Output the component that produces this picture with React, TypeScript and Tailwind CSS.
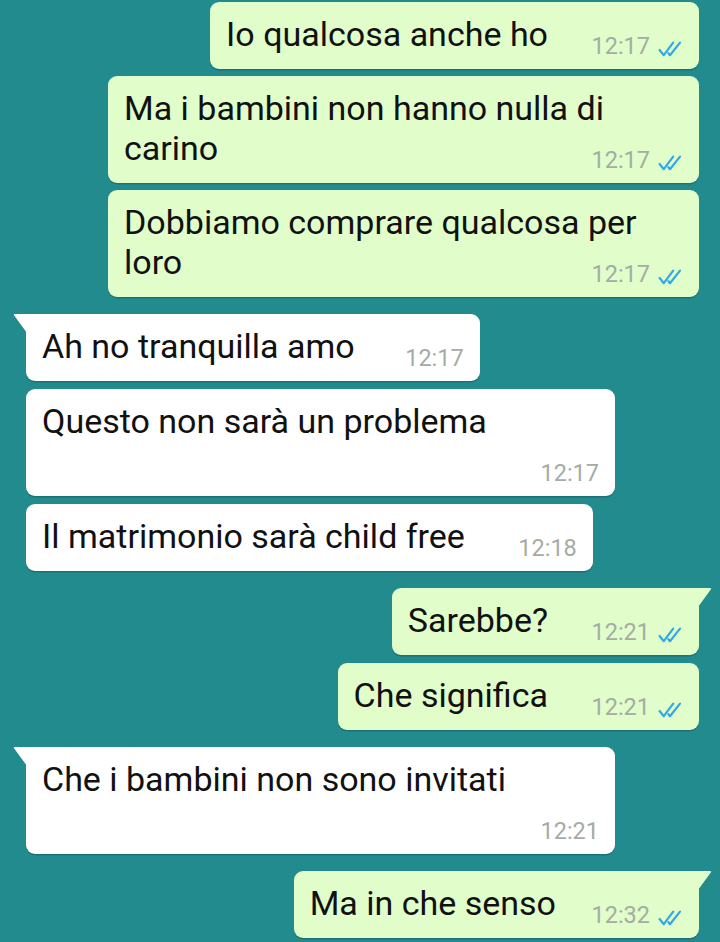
import React from 'react';

type Msg = {
  id: number;
  text: string;
  time: string;
  out: boolean;
  tail?: boolean;
  timeOwnLine?: boolean;
  spacer?: string;
  gap: string;
};

const messages: Msg[] = [
  { id: 1, text: 'Io qualcosa anche ho', time: '12:17', out: true, gap: 'mt-[2px]' },
  { id: 2, text: 'Ma i bambini non hanno nulla di carino', time: '12:17', out: true, gap: 'mt-[7px]' },
  { id: 3, text: 'Dobbiamo comprare qualcosa per loro', time: '12:17', out: true, gap: 'mt-[7px]' },
  { id: 4, text: 'Ah no tranquilla amo', time: '12:17', out: false, tail: true, spacer: 'w-[109px]', gap: 'mt-[17px]' },
  { id: 5, text: 'Questo non sarà un problema', time: '12:17', out: false, timeOwnLine: true, gap: 'mt-[8px]' },
  { id: 6, text: 'Il matrimonio sarà child free', time: '12:18', out: false, gap: 'mt-[8px]' },
  { id: 7, text: 'Sarebbe?', time: '12:21', out: true, tail: true, gap: 'mt-[17px]' },
  { id: 8, text: 'Che significa', time: '12:21', out: true, gap: 'mt-[8px]' },
  { id: 9, text: 'Che i bambini non sono invitati', time: '12:21', out: false, tail: true, timeOwnLine: true, gap: 'mt-[17px]' },
  { id: 10, text: 'Ma in che senso', time: '12:32', out: true, tail: true, spacer: 'w-[127px]', gap: 'mt-[17px]' },
];

// double blue ticks
function ReadTicks() {
  return (
    <svg width="25" height="16" viewBox="0 0 25 16" fill="none" className="mb-[1px]">
      <path d="M1.6 9 L5.8 14.2 L15.2 1.6" stroke="#33a9e3" strokeWidth="2.2" strokeLinecap="round" strokeLinejoin="round" />
      <path d="M10.4 12.2 L12 14.2 L22 1.6" stroke="#33a9e3" strokeWidth="2.2" strokeLinecap="round" strokeLinejoin="round" />
    </svg>
  );
}

function Bubble({ m }: { m: Msg }) {
  const bg = m.out ? 'bg-[#e0fdca]' : 'bg-white';
  const fill = m.out ? '#e0fdca' : '#ffffff';
  const spacer = m.spacer ?? (m.out ? 'w-[135px]' : 'w-[112px]');
  return (
    <div className={`flex ${m.out ? 'justify-end pr-[21px]' : 'justify-start pl-[26px]'} ${m.gap}`}>
      <div
        className={`relative max-w-[591px] rounded-[9px] ${bg} px-4 pt-3 pb-[15px] shadow-[0_1.5px_0.5px_rgba(0,0,0,0.18)] ${
          m.tail ? (m.out ? 'rounded-tr-none' : 'rounded-tl-none') : ''
        } ${m.timeOwnLine ? 'w-[589px]' : ''}`}
      >
        {m.tail && !m.out && (
          <svg width="14" height="20" viewBox="0 0 14 20" className="absolute -left-[13px] top-0">
            <path d="M14 0 H2 Q0 0 1.2 1.6 L14 19 Z" fill={fill} />
          </svg>
        )}
        {m.tail && m.out && (
          <svg width="14" height="20" viewBox="0 0 14 20" className="absolute -right-[13px] top-0">
            <path d="M0 0 H12 Q14 0 12.8 1.6 L0 19 Z" fill={fill} />
          </svg>
        )}
        <p className="text-[34px] leading-[40px] text-[#111111] font-['Roboto',sans-serif]">
          {m.text}
          {m.timeOwnLine && <br />}
          <span className={`inline-block h-[1px] ${spacer}`} />
        </p>
        <span className="absolute right-4 bottom-[11px] flex items-end gap-2 text-[23.5px] leading-none text-[#a5aca5] font-['Roboto',sans-serif]">
          {m.time}
          {m.out && <ReadTicks />}
        </span>
      </div>
    </div>
  );
}

export default function App() {
  return (
    <div className="h-[942px] w-[720px] overflow-hidden bg-[#218b8e] font-['Roboto',sans-serif]">
      <div className="flex flex-col">
        {messages.map((m) => (
          <Bubble key={m.id} m={m} />
        ))}
      </div>
    </div>
  );
}
